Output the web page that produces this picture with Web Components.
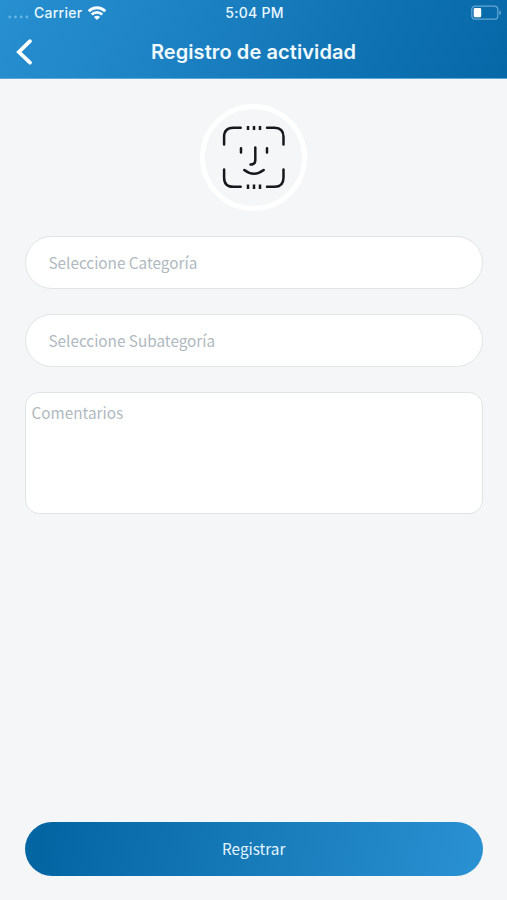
<!DOCTYPE html>
<html lang="es">
<head>
<meta charset="utf-8">
<title>Registro de actividad</title>
<style>
  html, body { margin: 0; height: 100%; }
  body { background: #f4f6f8; font-family: "Noto Sans CJK SC", "Noto Sans", sans-serif; overflow: hidden; }
</style>
</head>
<body>
<activity-screen></activity-screen>
<script>
const define = (name, html) => {
  const template = document.createElement('template');
  template.innerHTML = html;
  customElements.define(name, class extends HTMLElement {
    constructor() {
      super();
      this.attachShadow({ mode: 'open' }).append(template.content.cloneNode(true));
    }
  });
};

define('status-bar', `
  <style>
    :host { display: grid; grid-template-columns: 1fr auto 1fr; align-items: center; height: 26px;
      padding: 0 6px 0 8px; box-sizing: border-box; color: #eaf8ff; font: 500 14px/26px Inter, sans-serif; letter-spacing: .26px; }
    .left { display: flex; align-items: center; }
    .dots { margin: 7px 5px 0 0; }
    .wifi { margin-left: 5px; }
    .battery { justify-self: end; }
    svg { display: block; }
  </style>
  <div class="left">
    <svg class="dots" width="21" height="4" fill="#65b5e3"><circle cx="1.8" cy="2" r="1.4"/><circle cx="7.5" cy="2" r="1.4"/><circle cx="13.2" cy="2" r="1.4"/><circle cx="18.9" cy="2" r="1.4"/></svg>
    <slot name="carrier"></slot>
    <svg class="wifi" width="20" height="16" viewBox="0 0 20 16" fill="none" stroke="#f4fcff" stroke-width="2.8">
      <path d="M1.7 6.2C6.3 1.6 13.7 1.6 18.3 6.2"/><path d="M4.7 9.5C7.7 6.6 12.3 6.6 15.3 9.5"/>
      <path d="M10 15L6.9 11.9C8.7 10.4 11.3 10.4 13.1 11.9Z" fill="#f4fcff" stroke="none"/>
    </svg>
  </div>
  <slot name="time"></slot>
  <svg class="battery" width="30" height="16" viewBox="0 0 30 16">
    <rect x=".8" y="1.2" width="26" height="13" rx="3.3" fill="none" stroke="#65a9d4" stroke-width="1.2"/>
    <rect x="2.7" y="3.1" width="7.5" height="9.2" rx="1.3" fill="#fff"/>
    <path d="M28.3 5.3Q30 6 30 7.7T28.3 10.1Z" fill="#65a9d4"/>
  </svg>
`);

define('nav-header', `
  <style>
    :host { display: block; height: 79px; box-sizing: border-box; border-bottom: 1px solid #5fa9d8;
      background: linear-gradient(115deg, #2790d1 0%, #1b80c1 40%, #0d70b0 76%, #0668a7 100%) border-box; }
    .bar { display: grid; grid-template-columns: 1fr auto 1fr; align-items: center; height: 52px; }
    h1 { margin: 0; color: #f0faff; font: 600 20px/28px Inter, sans-serif; letter-spacing: .09px; }
    svg { display: block; margin-left: 15px; }
  </style>
  <slot name="status"></slot>
  <div class="bar">
    <svg width="20" height="30" viewBox="0 0 20 30" fill="none" stroke="#fff" stroke-width="3.8" stroke-linecap="round" stroke-linejoin="miter"><path d="M15 4.2L3.9 15L15 25.6"/></svg>
    <h1><slot></slot></h1>
  </div>
`);

define('face-badge', `
  <style>
    :host { display: block; width: 107px; height: 107px; box-sizing: border-box; border: 5px solid #fff; border-radius: 50%; }
    svg { display: block; margin: 17px auto 0 17px; }
  </style>
  <svg width="63" height="63" viewBox="0 0 63 63" fill="none" stroke="#17181b" stroke-width="2.5" stroke-linecap="round">
    <path d="M2.1 18.5V11Q2.1 1.7 11.3 1.7H18.7M45 1.7H52.5Q61.5 1.7 61.5 11V18.5M61.5 43.5V51.5Q61.5 60.8 52.5 60.8H45M18.7 60.8H11.3Q2.1 60.8 2.1 51.5V43.5"/>
    <path d="M19 22.2V26.4M45 22.2V26.4M33.3 21.5V34Q33.3 38.5 28.5 38.5M22.3 44Q31.8 51.5 41.7 44"/>
    <path stroke-linecap="butt" d="M26 -.1V4.1M32 -.1V4.1M38 -.1V4.1M26 58.4V63M32 58.4V63M38 58.4V63"/>
  </svg>
`);

define('select-field', `
  <style>
    :host { display: flex; align-items: center; height: 53px; box-sizing: border-box; padding: 0 22.5px 2px;
      border: 1px solid #e1e4e5; border-radius: 27px; background: #fff; color: #afb9bf;
      font-size: 15.3px; line-height: 24px; }
  </style>
  <slot></slot>
`);

define('comment-area', `
  <style>
    :host { display: block; height: 122px; box-sizing: border-box; padding: 7px 5.5px;
      border: 1px solid #e1e4e5; border-radius: 14px; background: #fff; color: #afb9bf;
      font-size: 15.3px; line-height: 24px; }
  </style>
  <slot></slot>
`);

define('primary-button', `
  <style>
    :host { display: block; }
    button { display: block; width: 100%; height: 54px; padding: 0 0 2px; border: 0; border-radius: 27px;
      background: linear-gradient(100deg, #0465a3 4%, #1c80bf 62%, #2990d1 97%); color: #e4f5fd; font: inherit; font-size: 15.3px; line-height: 24px; }
  </style>
  <button type="button"><slot></slot></button>
`);

define('activity-screen', `
  <style>
    :host { display: flex; flex-direction: column; height: 100vh; }
    main { flex: 1; display: flex; flex-direction: column; padding: 25px 24.5px 24px 25px; }
    face-badge { align-self: center; margin-bottom: 25px; }
    select-field { margin-bottom: 25px; }
    primary-button { margin-top: auto; }
  </style>
  <nav-header>
    <status-bar slot="status"><span slot="carrier">Carrier</span><span slot="time">5:04 PM</span></status-bar>
    Registro de actividad
  </nav-header>
  <main>
    <face-badge role="img" aria-label="Rostro"></face-badge>
    <select-field>Seleccione Categoría</select-field>
    <select-field>Seleccione Subategoría</select-field>
    <comment-area>Comentarios</comment-area>
    <primary-button>Registrar</primary-button>
  </main>
`);
</script>
</body>
</html>
